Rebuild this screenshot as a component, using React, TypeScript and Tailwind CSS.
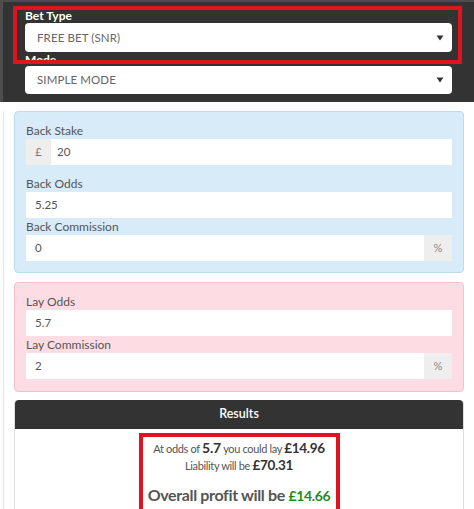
import React from "react";

function Caret() {
  return (
    <svg width="8" height="6" viewBox="0 0 8 6" className="shrink-0">
      <path d="M0.5 0.5 L7.5 0.5 L4 5.5 Z" fill="#333" />
    </svg>
  );
}

function Select({ value, h }: { value: string; h: string }) {
  return (
    <div className={`flex items-center justify-between rounded-[4px] bg-white pl-[12px] pr-[8px] ${h}`}>
      <span className="text-[11.5px] text-[#666] tracking-[0.1px]">{value}</span>
      <Caret />
    </div>
  );
}

function Field({ value, prefix, suffix }: { value: string; prefix?: string; suffix?: string }) {
  return (
    <div className="flex h-[26px] bg-white">
      {prefix && (
        <div className="flex w-[25px] items-center justify-center bg-[#eeeeee] text-[11px] text-[#777]">{prefix}</div>
      )}
      <div className={`flex flex-1 items-center text-[11.5px] text-[#555] ${prefix ? "pl-[6px]" : "pl-[9px]"}`}>{value}</div>
      {suffix && (
        <div className="flex w-[28px] items-center justify-center bg-[#eeeeee] text-[11px] text-[#888]">{suffix}</div>
      )}
    </div>
  );
}

function Label({ children, cls = "" }: { children: React.ReactNode; cls?: string }) {
  return <div className={`h-[17px] text-[12px] leading-[17px] text-[#555] ${cls}`}>{children}</div>;
}

export default function App() {
  return (
    <div className="w-[474px] h-[509px] overflow-hidden bg-white" style={{ fontFamily: "Lato, 'Open Sans', sans-serif" }}>
      <div className="relative border-t-[2px] border-l-[3px] border-[#4d4d4d] bg-[#333333] px-[22px] pt-[7px] pb-[8px]">
        <div className="h-[14px] text-[12px] font-bold leading-[14px] text-white">Bet Type</div>
        <div>
          <Select value="FREE BET (SNR)" h="h-[29px]" />
        </div>
        <div className="mt-[1px] h-[13px] text-[12px] font-bold leading-[14px] text-white">Mode</div>
        <div>
          <Select value="SIMPLE MODE" h="h-[28px]" />
        </div>
        <div className="pointer-events-none absolute left-[10px] top-[4px] h-[58px] w-[449px] border-[4px] border-[#e0141e]" />
      </div>

      <div className="ml-[3px] border-l border-[#e6e6e6] pb-[20px]">
        <div className="mx-[10px] mt-[9px] rounded-[4px] border border-[#b9dcf2] bg-[#d8ebf8] px-[11px] pt-[10px] pb-[11px]">
          <Label>Back Stake</Label>
          <Field value="20" prefix="£" />
          <Label cls="mt-[10px]">Back Odds</Label>
          <Field value="5.25" />
          <Label>Back Commission</Label>
          <Field value="0" suffix="%" />
        </div>

        <div className="mx-[10px] mt-[9px] rounded-[4px] border border-[#f5c1cb] bg-[#fddde3] px-[11px] pt-[10px] pb-[12px]">
          <Label>Lay Odds</Label>
          <Field value="5.7" />
          <Label>Lay Commission</Label>
          <Field value="2" suffix="%" />
        </div>

        <div className="mx-[10px] mt-[8px] rounded-t-[4px] border-x border-[#dddddd]">
          <div className="flex h-[29px] items-center justify-center rounded-t-[4px] bg-[#333333] text-[12.5px] font-semibold text-white">
            Results
          </div>
          <div className="flex justify-center pt-[4px]">
            <div className="flex w-[201px] flex-col items-center border-[4px] border-b-0 border-[#e0141e] pt-[3px] pb-[20px] text-[#555] whitespace-nowrap">
              <div className="text-[11px] leading-[16px] tracking-[-0.35px]">
                At odds of <span className="text-[14px] font-bold tracking-[-0.2px] text-[#333]">5.7</span> you could lay{" "}
                <span className="text-[13.5px] font-bold tracking-[-0.3px] text-[#333]">£14.96</span>
              </div>
              <div className="text-[11px] leading-[16px] tracking-[-0.35px]">
                Liability will be <span className="text-[13.5px] font-bold tracking-[-0.3px] text-[#333]">£70.31</span>
              </div>
              <div className="mt-[10px] text-[16px] font-bold leading-[22px] tracking-[-0.35px] text-[#555]">
                Overall profit will be <span className="text-[14px] text-[#228b22]">£14.66</span>
              </div>
            </div>
          </div>
        </div>
      </div>
    </div>
  );
}
